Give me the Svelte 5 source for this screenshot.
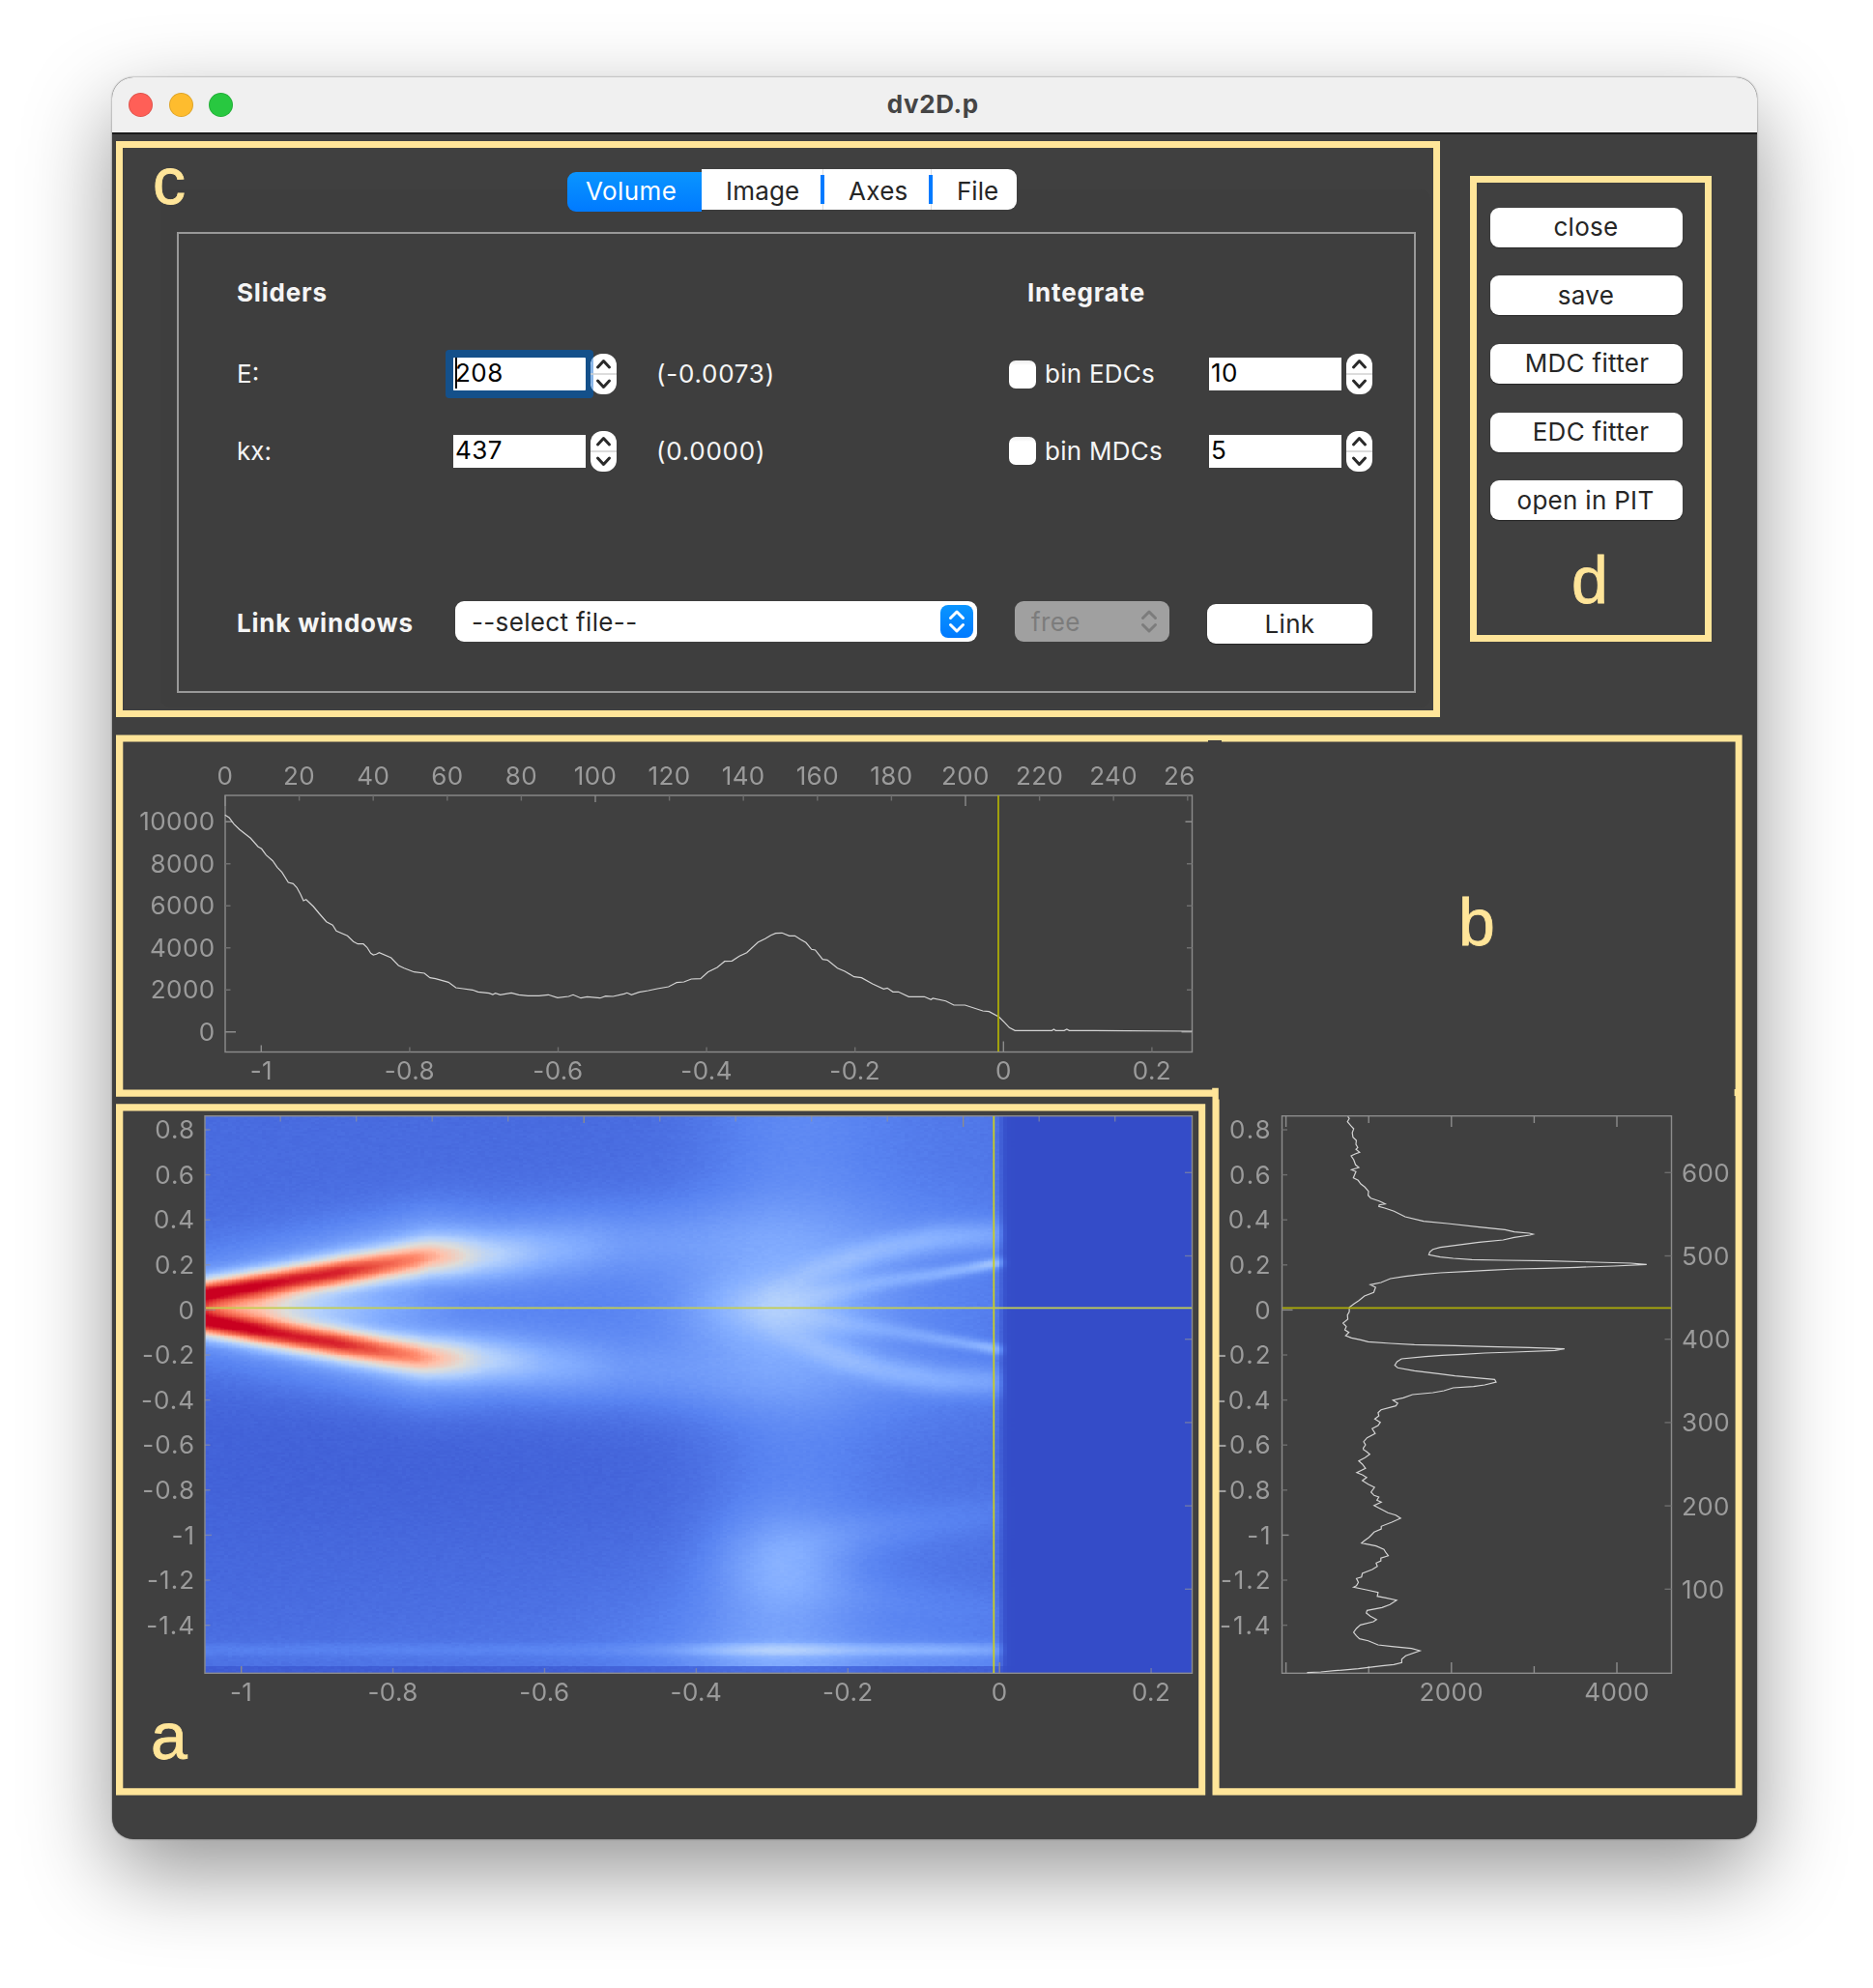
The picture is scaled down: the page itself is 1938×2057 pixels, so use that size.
<script>
  import { onMount } from 'svelte';

  const actions = [
    { label: 'close', shift: 0 },
    { label: 'save', shift: 0 },
    { label: 'MDC fitter', shift: 2 },
    { label: 'EDC fitter', shift: 10 },
    { label: 'open in PIT', shift: -1 }
  ];

  const sliders = [
    { name: 'E:', value: '208', info: '(-0.0073)', bin: 'bin EDCs', width: '10', focus: true },
    { name: 'kx:', value: '437', info: '(0.0000)', bin: 'bin MDCs', width: '5', focus: false }
  ];

  // --- curves -------------------------------------------------------------
  const toPath = (pts) => pts.map(([x, y]) => `${x.toFixed(1)},${y.toFixed(1)}`).join(' ');
  const pairs = (s) => s.split(' ').map((p) => p.split(',').map(Number));
  const scale = (s, ox, oy, kx) => pairs(s).map(([x, y]) => [ox + x / kx, oy + y / 3]);

  const edc = toPath([
    ...scale(
      '321,310 332,318 345,338 360,355 390,382 410,408 420,415 432,434 450,452 462,472 475,488 492,519 505,523 515,535 525,556 533,576 540,572 560,594 575,615 595,641 612,652 622,670 652,685 668,703 680,710 695,710 705,721 715,739 722,744 730,742 738,737 770,753 790,777 805,785 832,797 860,801 875,815 890,818 925,829 945,846 965,849 990,853 1005,859 1035,863 1045,867 1052,863 1065,868 1095,862 1115,868 1140,871 1170,871 1195,868 1220,877 1250,873 1262,868 1283,878 1300,874 1335,878 1350,872 1370,873 1400,865 1408,862 1420,868 1440,860 1465,855 1490,849 1520,843 1540,831',
      110, 740, 2.613
    ),
    ...scale(
      '0,830 20,828 40,819 65,818 85,797 110,783 130,764 150,763 170,748 190,737 220,705 240,694 255,683 268,677 285,676 305,685 320,685 335,696 350,706 365,727 375,729 395,758 408,760 435,785 455,795 480,812 500,815 530,834 560,850 570,847 585,859 600,859 628,874 670,874 688,883 693,879 728,887 750,900 780,900 828,918 845,920 872,937 888,955 900,970 915,979 1015,979 1020,975 1025,979 1048,979 1055,975 1062,979 1394,981',
      700, 740, 2.613
    )
  ]);

  const mdc = toPath([
    ...scale(
      '430,106 434,112 429,122 438,134 446,144 442,156 444,170 453,180 452,192 457,202 452,208 462,217 450,222 439,228 446,240 451,256 460,264 440,271 452,277 445,296 458,304 465,315 476,325 486,338 485,350 492,359 515,368 522,372 531,377 515,380 514,385 530,390 555,400 585,417 635,431 700,438 785,449 855,457 880,464 920,468 931,471 922,474 880,481 850,489 785,496 725,505 680,512 660,518 652,526 649,535 680,542 715,546 765,550 850,552 975,554 1100,558 1195,561 1238,565 1150,570 1050,574 965,577 885,579 810,583 750,587 680,591 630,596 585,602 545,609 520,621 491,628 505,636 500,652 475,663 460,677 447,687 434,698 434,712 429,722 430,735 417,747 426,758 422,768 433,776 424,786 440,793 465,799 485,805 545,810 610,814 720,817 808,820 920,823 1016,827 990,832 880,837 800,840 740,844 685,847 640,851 575,858 563,867 557,878 565,886 610,895 680,905 720,911 770,916 827,922 831,930 800,939 770,944 715,948 690,957 660,963 605,969 580,979 552,986 565,996 560,1004 520,1016 512,1025 514,1035 503,1045 518,1055 512,1065 496,1075 504,1090 482,1103 473,1115 478,1125 472,1135',
      1230, 1120, 2.613
    ),
    ...scale(
      '443,0 450,5 459,14 447,25 431,35 440,45 448,58 426,71 440,78 451,86 440,96 455,107 471,117 462,132 470,142 482,147 477,157 488,163 470,173 485,183 505,196 525,203 537,213 515,225 488,238 488,246 470,256 457,272 445,283 438,290 475,299 495,310 500,320 506,329 487,337 487,345 475,352 478,362 465,372 440,384 438,395 425,400 430,412 425,422 418,427 450,435 480,443 478,455 500,460 527,467 510,481 490,490 452,499 450,507 460,517 476,527 468,534 435,544 425,555 418,567 425,578 433,587 455,593 480,606 515,611 565,617 586,624 550,640 540,650 540,661 520,667 490,671 430,680 370,686 335,690 300,692',
      1230, 1500, 2.45
    )
  ]);

  // --- axes ---------------------------------------------------------------
  const channels = Array.from({ length: 14 }, (_, i) => ({
    x: 233 + i * 76.6,
    label: i === 13 ? '' : String(i * 20),
    len: i % 10 === 0 ? 11 : i % 5 === 0 ? 7 : 5.5
  }));
  const energies = ['-1', '-0.8', '-0.6', '-0.4', '-0.2', '0', '0.2'];
  const topEnergy = energies.map((label, i) => ({ label, x: 270.3 + i * 153.6, len: i === 5 ? 11 : i === 0 ? 7 : 5 }));
  const mapEnergy = energies.map((label, i) => ({ label, x: 249.7 + i * 156.9, len: i === 5 ? 11 : i === 0 ? 7 : 5 }));
  const mapChannels = Array.from({ length: 12 }, (_, i) => ({ x: 290.2 + i * 78.5, len: i === 9 ? 11 : i === 4 ? 7 : 5.5 }));
  const counts = ['10000', '8000', '6000', '4000', '2000', '0'].map((label, i) => ({
    label, y: 850.2 + i * 43.5, len: i === 5 ? 11 : i === 0 ? 7 : 5.5
  }));
  const momenta = ['0.8', '0.6', '0.4', '0.2', '0', '-0.2', '-0.4', '-0.6', '-0.8', '-1', '-1.2', '-1.4'].map((label, i) => ({
    label, y: 1169 + i * 46.6, len: i === 4 ? 11 : i === 9 ? 7 : 5.5
  }));
  const rows = ['600', '500', '400', '300', '200', '100'].map((label, i) => ({ label, y: 1213.3 + i * 86.2 }));
  const mdcCounts = ['', '', '2000', '', '4000'].map((label, i) => ({ label, x: 1330.6 + i * 85.6, len: i % 2 ? 7 : 11 }));

  // --- intensity map ------------------------------------------------------
  const stops = [
    [51, 75, 199], [88, 131, 241], [132, 174, 255], [180, 209, 252], [221, 221, 218],
    [255, 193, 170], [255, 134, 104], [232, 74, 60], [202, 0, 32]
  ];

  function colour(t) {
    const v = Math.max(0, Math.min(0.9999, t)) * 8;
    const i = Math.floor(v);
    const f = v - i;
    return stops[i].map((c, k) => c + (stops[i + 1][k] - c) * f);
  }

  function curve(x, pts) {
    if (x <= pts[0][0]) return pts[0][1];
    for (let i = 1; i < pts.length; i++) {
      if (x <= pts[i][0]) {
        const [x0, y0] = pts[i - 1];
        const [x1, y1] = pts[i];
        return y0 + ((y1 - y0) * (x - x0)) / (x1 - x0);
      }
    }
    return pts[pts.length - 1][1];
  }

  const g = (d, s) => Math.exp((-d * d) / (2 * s * s));

  const upper = [[212, 1337], [280, 1327], [351, 1316], [400, 1308], [445, 1300], [520, 1298], [620, 1290], [760, 1283]];
  const lower = [[212, 1368], [280, 1379], [351, 1390], [400, 1398], [440, 1404], [520, 1407], [620, 1414], [760, 1422]];
  const core = [[212, 0.74], [260, 0.76], [350, 0.72], [390, 0.61], [430, 0.49], [460, 0.37], [500, 0.2], [560, 0.09], [640, 0.03], [760, 0.01], [900, 0]];
  const outerUp = [[770, 1348], [796, 1336], [843, 1313], [907, 1293], [968, 1281], [1034, 1277]];
  const outerLow = [[770, 1358], [818, 1385], [861, 1403], [914, 1418], [968, 1427], [1034, 1430]];
  const innerUp = [[780, 1352], [843, 1340], [914, 1325], [968, 1318], [1034, 1306]];
  const innerLow = [[780, 1354], [843, 1365], [932, 1378], [1034, 1396]];
  const outerAmp = [[760, 0], [820, 0.04], [880, 0.1], [960, 0.12], [1034, 0.1]];
  const innerAmp = [[780, 0], [850, 0.05], [930, 0.09], [1000, 0.14], [1034, 0.22]];

  function intensity(x, y) {
    let t = 0.055 + 0.015 * g(y - 1200, 120) + 0.02 * g(x - 520, 260) * g(y - 1690, 90);
    t += 0.055 * g(x - 815, 65) + 0.03 * g(x - 950, 110);
    t -= 0.01 * g(y - 1510, 60) * g(x - 350, 250);

    const c = curve(x, core);
    const s = curve(x, [[212, 10], [400, 12], [450, 13.5], [620, 19], [900, 22]]);
    const halo = curve(x, [[212, 0.08], [340, 0.13], [430, 0.17], [520, 0.11], [650, 0.07], [820, 0.045], [1034, 0.02]]);
    const yu = curve(x, upper);
    const yl = curve(x, lower);
    t += c * (g(y - yu, s) + g(y - yl, s));
    t += halo * (g(y - yu + 8, 30) + g(y - yl - 8, 30));
    t += curve(x, [[212, 0.24], [270, 0.3], [330, 0.16], [400, 0.07], [480, 0]]) * g(y - 1353, 12);
    t += 0.05 * g(y - 1353, 55) * g(x - 620, 330);

    t += 0.09 * g(x - 795, 52) * g(y - 1353, 22) + 0.075 * g(x - 805, 75) * g(y - 1353, 48);
    t += curve(x, outerAmp) * (g(y - curve(x, outerUp), 11) + g(y - curve(x, outerLow), 11));
    const si = curve(x, [[800, 9], [930, 6], [1034, 4]]);
    t += curve(x, innerAmp) * (g(y - curve(x, innerUp), si) + 0.85 * g(y - curve(x, innerLow), si));

    t += 0.11 * g(x - 805, 46) * g(y - 1620, 38) + 0.03 * g(x - 720, 90) * g(y - 1700, 60);
    t += curve(x, [[780, 0], [880, 0.04], [1034, 0.03]]) * g(y - curve(x, [[780, 1602], [920, 1580], [1034, 1566]]), 16);
    t += curve(x, [[780, 0], [880, 0.02], [1034, 0.02]]) * g(y - curve(x, [[780, 1640], [1034, 1665]]), 16);
    const strip = 0.03 + 0.1 * g(x - 800, 62) + 0.07 * g(x - 970, 75);
    t += strip * g(y - 1707, 4.5);
    if (y > 1700 && y < 1723) t += strip * 0.6;
    else if (y <= 1700) t += strip * 0.45 * Math.exp((y - 1700) / 26);
    if (y > 1723) t = 0.035 + (t - 0.06) * 0.5;
    return t;
  }

  let canvas;

  onMount(() => {
    const ctx = canvas.getContext('2d');
    const { width: w, height: h } = canvas;
    const img = ctx.createImageData(w, h);
    const cellX = 1021 / 261;
    const cellY = 577 / 666;
    let seed = 7;
    const noise = () => {
      seed = (seed * 1664525 + 1013904223) >>> 0;
      return seed / 4294967296 - 0.5;
    };
    const cols = 262;
    const grain = Array.from({ length: 290 * cols }, () => noise() + noise());
    for (let py = 0; py < h; py++) {
      for (let px = 0; px < w; px++) {
        const ix = Math.floor(px / cellX);
        const x = 212 + (ix + 0.5) * cellX;
        const y = 1155 + (Math.floor(py / cellY) + 0.5) * cellY;
        const edge = 1 / (1 + Math.exp((x - 1035) / 2.2));
        let t = intensity(Math.min(x, 1034), y) + grain[Math.floor(py / 2) * cols + ix] * 0.009;
        t = t * edge + 0.003;
        const [r, gr, b] = colour(t);
        const o = (py * w + px) * 4;
        img.data[o] = r;
        img.data[o + 1] = gr;
        img.data[o + 2] = b;
        img.data[o + 3] = 255;
      }
    }
    ctx.putImageData(img, 0, 0);
  });
</script>

{#snippet stepper(focus)}
  <svg class="stepper" width="27" height="42" viewBox="0 0 27 42">
    <rect class="body" width="27" height="42" rx="12" />
    {#if focus}<path class="glow" d="M3 4 A12 12 0 0 0 0 12 V30 A12 12 0 0 0 3 38 Z" />{/if}
    <path class="split" d="M0 21 H27" />
    <path class="arrow" d="M7.5 14 L13.5 7.5 L19.5 14 M7.5 28 L13.5 34.5 L19.5 28" />
  </svg>
{/snippet}

<div class="page">
  <div class="window">
    <header class="titlebar">
      <span class="light red"></span>
      <span class="light amber"></span>
      <span class="light green"></span>
      <h1>dv2D.p</h1>
    </header>

    <div class="top">
      <section class="frame controls">
        <span class="letter letter-c">c</span>
        <nav class="tabs">
          <span class="tab active">Volume</span>
          <span class="tab image">Image</span>
          <span class="tab axes">Axes</span>
          <span class="tab file">File</span>
        </nav>
        <div class="group">
          <div class="pane">
            <div class="fields">
              <strong class="sliders-title">Sliders</strong>
              <strong class="integrate-title">Integrate</strong>
              {#each sliders as row}
                <span class="label">{row.name}</span>
                <div class="spin">
                  <span class="value" class:focus={row.focus}>{row.value}</span>
                  {@render stepper(row.focus)}
                </div>
                <span class="label info">{row.info}</span>
                <label class="check"><i></i>{row.bin}</label>
                <div class="spin">
                  <span class="value">{row.width}</span>
                  {@render stepper(false)}
                </div>
              {/each}
            </div>
            <div class="link-row">
              <strong>Link windows</strong>
              <div class="select file-select">
                <span>--select file--</span>
                <svg width="34" height="34" viewBox="0 0 34 34">
                  <defs>
                    <linearGradient id="blue" x1="0" y1="0" x2="0" y2="1">
                      <stop offset="0" stop-color="#0a95ff" />
                      <stop offset="1" stop-color="#007aff" />
                    </linearGradient>
                  </defs>
                  <rect width="34" height="34" rx="8" fill="url(#blue)" />
                  <path d="M10.5 13.5 L17 7 L23.5 13.5 M10.5 20.5 L17 27 L23.5 20.5" />
                </svg>
              </div>
              <div class="select free-select">
                <span>free</span>
                <svg width="34" height="34" viewBox="0 0 34 34">
                  <path d="M10.5 13.5 L17 7 L23.5 13.5 M10.5 20.5 L17 27 L23.5 20.5" />
                </svg>
              </div>
              <button class="push link">Link</button>
            </div>
          </div>
        </div>
      </section>

      <aside class="frame actions">
        {#each actions as a}
          <button class="push"><span style:margin-left="{a.shift}px">{a.label}</span></button>
        {/each}
        <span class="letter">d</span>
      </aside>
    </div>

    <div class="plots">
      <canvas bind:this={canvas} width="1021" height="576"></canvas>
      <svg class="overlay" width="1702" height="1161" viewBox="116 742 1702 1161">
        <!-- energy distribution curve -->
        <g class="axis">
          <rect x="233" y="823" width="1000.5" height="265.5" />
          {#each channels as t}<path class:strong={t.len > 6} d="M{t.x} 823 v{t.len}" />{/each}
          {#each topEnergy as t}<path class:strong={t.len > 6} d="M{t.x} 1088.5 v{-t.len}" />{/each}
          {#each counts as t}
            <path class:strong={t.len > 6} d="M233 {t.y} h{t.len} M1233.5 {t.y} h{-t.len}" />
          {/each}
        </g>
        <polyline class="curve" points={edc} />
        <path class="cursor" d="M1033 823 V1088" />
        <g class="ticks mid">
          {#each channels as t}<text x={t.x} y="811.5">{t.label}</text>{/each}
          {#each topEnergy as t}<text x={t.x} y="1116.5">{t.label}</text>{/each}
        </g>
        <text class="ticks" x="1204" y="811.5">26</text>
        <g class="ticks end">
          {#each counts as t}<text x="222.5" y={t.y + 9.2}>{t.label}</text>{/each}
        </g>

        <!-- intensity map axes -->
        <g class="axis on-map">
          <rect x="212" y="1154.7" width="1021.5" height="576.6" />
          {#each mapEnergy as t}<path class:strong={t.len > 6} d="M{t.x} 1731 v{-t.len}" />{/each}
          {#each mapChannels as t}<path class:strong={t.len > 6} d="M{t.x} 1155 v{t.len}" />{/each}
          {#each momenta as t}<path d="M212 {t.y} h{t.len}" />{/each}
          {#each rows as t}<path d="M1233 {t.y} h-7" />{/each}
        </g>
        <path class="cursor map-h" d="M213 1353.3 H1233" />
        <path class="cursor bright" d="M1028.3 1155 V1731" />
        <g class="ticks mid">
          {#each mapEnergy as t}<text x={t.x} y="1760">{t.label}</text>{/each}
        </g>
        <g class="ticks end spaced">
          {#each momenta as t}<text x="202" y={t.y + 9.2}>{t.label}</text>{/each}
        </g>

        <!-- momentum distribution curve -->
        <g class="axis">
          <rect x="1326.5" y="1154.7" width="403" height="576.6" />
          {#each mdcCounts as t}
            <path class:strong={t.len > 6} d="M{t.x} 1155 v{t.len} M{t.x} 1731 v{-t.len}" />
          {/each}
          {#each momenta as t}<path class:strong={t.len > 6} d="M1326.5 {t.y} h{t.len}" />{/each}
          {#each rows as t}<path d="M1729.5 {t.y} h-7" />{/each}
        </g>
        <polyline class="curve" points={mdc} />
        <path class="cursor" d="M1327 1353.3 H1729" />
        <g class="ticks mid">
          {#each mdcCounts as t}<text x={t.x} y="1760">{t.label}</text>{/each}
        </g>
        <g class="ticks end wider">
          {#each momenta as t}<text x="1316.5" y={t.y + 9.2}>{t.label}</text>{/each}
        </g>
        <g class="ticks">
          {#each rows as t}<text x="1740" y={t.y + 9.4}>{t.label}</text>{/each}
        </g>

        <!-- region outlines -->
        <path class="region" fill-rule="evenodd" d="M120 760.4 H1802.6 V1857.6 H1254.5 V1134.8 H120 Z M127.3 767.6 V1127.5 H1254.2 V1125.8 H1260.8 V1137.5 L1261.6 1137.5 V1850.2 H1795.6 V1134 H1794.6 V1127 H1795.6 V767.6 H1264 V766 H1250 V767.6 Z" />
        <path class="region" fill-rule="evenodd" d="M120 1142.3 H1247.2 V1857.6 H120 Z M127.3 1149.4 V1850.2 H1240.2 V1149.4 Z" />
        <text class="mark" x="1528" y="978">b</text>
        <text class="mark" x="175" y="1820">a</text>
      </svg>
    </div>
  </div>
</div>

<style>
  :global(body) {
    margin: 0;
    background: #fff;
  }

  .page {
    box-sizing: border-box;
    width: 1938px;
    height: 2057px;
    padding: 80px 0 0 116px;
    overflow: hidden;
    background: #fff;
    font-family: Inter, 'Liberation Sans', sans-serif;
    font-size: 26px;
    line-height: 32px;
  }

  .window {
    display: flex;
    flex-direction: column;
    width: 1702px;
    height: 1823px;
    border-radius: 22px;
    background: #404040;
    box-shadow:
      0 0 2px rgba(0, 0, 0, 0.55),
      0 34px 90px rgba(0, 0, 0, 0.42);
  }

  .titlebar {
    box-sizing: border-box;
    display: flex;
    align-items: center;
    height: 59px;
    padding: 0 16px 0 17px;
    gap: 16.5px;
    border-bottom: 2px solid #1c1c1c;
    border-radius: 22px 22px 0 0;
    background: #f0f0f0;
    flex: none;
  }

  .light {
    box-sizing: border-box;
    width: 25px;
    height: 25px;
    border: 1px solid rgba(0, 0, 0, 0.12);
    border-radius: 50%;
  }

  .red {
    background: #ff5f57;
  }

  .amber {
    background: #febc2e;
  }

  .green {
    background: #28c840;
  }

  h1 {
    flex: 1;
    margin: 0 129px 1px 0;
    color: #454545;
    font-size: 26px;
    font-weight: 700;
    letter-spacing: 0.6px;
    text-align: center;
  }

  .top {
    display: flex;
    align-items: flex-start;
    height: 603px;
    padding-left: 4px;
    flex: none;
  }

  .frame {
    box-sizing: border-box;
    border: 7px solid #ffe599;
  }

  .controls {
    position: relative;
    width: 1370px;
    height: 596px;
    margin-top: 7px;
  }

  .letter {
    color: #ffe599;
    font-family: 'Liberation Sans', sans-serif;
    font-size: 68px;
    line-height: 78px;
    -webkit-text-stroke: 0.8px #ffe599;
  }

  .letter-c {
    position: absolute;
    top: -5px;
    left: 31px;
  }

  .tabs {
    position: relative;
    display: flex;
    align-items: flex-start;
    margin: 22px 0 -23px 460px;
    color: #262626;
  }

  .tab {
    box-sizing: border-box;
    height: 42px;
    background: #fff;
    line-height: 46px;
  }

  .active {
    width: 139px;
    height: 41px;
    margin-top: 3px;
    padding-left: 19px;
    border-radius: 9px 0 0 9px;
    background: linear-gradient(#0a95ff, #007aff);
    color: #fff;
    letter-spacing: 0.4px;
    line-height: 40px;
  }

  .image {
    width: 123px;
    padding-left: 25px;
    letter-spacing: 0.2px;
  }

  .axes,
  .file {
    background:
      linear-gradient(#007aff, #007aff) 0 6px / 4px 30px no-repeat,
      linear-gradient(#ddd, #ddd) 2px 0 / 1px 42px no-repeat,
      #fff;
  }

  .axes {
    width: 112px;
    padding-left: 29px;
    letter-spacing: 0.3px;
  }

  .file {
    width: 91px;
    padding-left: 29px;
    border-radius: 0 9px 9px 0;
  }

  .group {
    box-sizing: border-box;
    width: 1314px;
    height: 536px;
    margin-left: 39px;
    padding: 44px 15px 0 17px;
    border-radius: 10px;
    background: #3e3e3e;
  }

  .pane {
    box-sizing: border-box;
    height: 477px;
    padding: 20px 0 0 60px;
    border: 2px solid #989898;
    color: #f5f5f5;
  }

  .fields {
    display: grid;
    grid-template-columns: 224px 210px 365px 207px 170px;
    grid-template-rows: 81px 88px 71px;
    align-items: center;
  }

  strong {
    font-weight: 700;
    letter-spacing: 0.8px;
  }

  .info {
    letter-spacing: 0.75px;
  }

  .sliders-title {
    grid-column: 1 / 4;
  }

  .integrate-title {
    grid-column: 4 / 6;
    padding-left: 19px;
  }

  .spin {
    display: flex;
    align-items: center;
    gap: 5px;
  }

  .value {
    box-sizing: border-box;
    width: 137px;
    height: 34px;
    padding-left: 2px;
    background: #fff;
    color: #000;
    letter-spacing: 0.5px;
    line-height: 32px;
  }

  .focus {
    border-left: 1px solid #fff;
    padding-left: 1px;
    background: linear-gradient(#000, #000) 1px 0 / 2px 32px no-repeat #fff;
    box-shadow: 0 0 0 8px #14508a;
    border-radius: 1px;
  }

  .stepper {
    position: relative;
  }

  .body {
    fill: #fff;
  }

  .glow {
    fill: #8ab6e8;
  }

  .split {
    stroke: #d0d0d0;
    stroke-width: 1.5;
  }

  .arrow {
    fill: none;
    stroke: #2a2a2a;
    stroke-width: 3;
    stroke-linecap: round;
    stroke-linejoin: round;
  }

  .check {
    display: flex;
    align-items: center;
    gap: 9px;
    letter-spacing: 0.25px;
  }

  .check i {
    width: 28px;
    height: 29px;
    border-radius: 7px;
    background: linear-gradient(#ececec, #fff 5px);
  }

  .link-row {
    display: flex;
    align-items: flex-start;
    margin-top: 120px;
  }

  .link-row strong {
    width: 226px;
    line-height: 45px;
    white-space: nowrap;
  }

  .select {
    box-sizing: border-box;
    display: flex;
    align-items: center;
    justify-content: space-between;
    height: 42px;
    padding: 0 4px 0 17px;
    border-radius: 9px;
    background: #fff;
    color: #262626;
    letter-spacing: 0.35px;
  }

  .select span {
    padding-top: 2px;
  }

  .select path {
    fill: none;
    stroke: #fff;
    stroke-width: 3;
    stroke-linecap: round;
    stroke-linejoin: round;
  }

  .file-select {
    width: 540px;
    margin-right: 39px;
  }

  .free-select {
    width: 160px;
    margin-right: 39px;
    background: #a0a0a0;
    color: #7c7c7c;
  }

  .free-select path {
    stroke: #7c7c7c;
  }

  .push {
    display: block;
    width: 199px;
    height: 41px;
    padding: 0;
    border: 0;
    border-radius: 9px;
    background: #fff;
    box-shadow: 0 1px 1px rgba(0, 0, 0, 0.4);
    color: #262626;
    font: inherit;
    letter-spacing: 0.3px;
    line-height: 38px;
    white-space: nowrap;
  }

  .link {
    width: 171px;
    margin-top: 3px;
    line-height: 40px;
  }

  .actions {
    display: flex;
    flex-direction: column;
    align-items: flex-start;
    width: 250px;
    height: 482px;
    margin: 43px 0 0 31px;
    padding: 25.5px 0 0 13.5px;
    gap: 29.7px;
  }

  .actions .letter {
    box-sizing: border-box;
    width: 199px;
    margin-top: -7px;
    padding-left: 8px;
    text-align: center;
  }

  .plots {
    display: grid;
    height: 1161px;
  }

  .plots > * {
    grid-area: 1 / 1;
  }

  canvas {
    margin: 413px 0 0 96px;
  }

  .overlay {
    display: block;
    position: relative;
  }

  .axis rect,
  .axis path {
    fill: none;
    stroke: #6e6e6e;
    stroke-width: 1.4;
  }

  .axis rect,
  .axis .strong {
    stroke: #8c8c8c;
  }

  .on-map path {
    stroke: rgba(150, 150, 150, 0.6);
  }

  .curve {
    fill: none;
    stroke: #d4d4d4;
    stroke-width: 1.2;
  }

  .cursor {
    fill: none;
    stroke: #acac08;
    stroke-width: 1.8;
  }

  .map-h {
    stroke: #c4ce50;
  }

  .bright {
    stroke: #c8cc22;
  }

  .ticks {
    fill: #9b9b9b;
    font-size: 26px;
    letter-spacing: 0.4px;
  }

  .spaced {
    letter-spacing: 1px;
  }

  .wider {
    letter-spacing: 1.9px;
  }

  .mid {
    text-anchor: middle;
  }

  .end {
    text-anchor: end;
  }

  .region {
    fill: #ffe599;
  }

  .mark {
    fill: #ffe599;
    stroke: #ffe599;
    stroke-width: 0.8px;
    font-family: 'Liberation Sans', sans-serif;
    font-size: 68px;
    text-anchor: middle;
  }
</style>
